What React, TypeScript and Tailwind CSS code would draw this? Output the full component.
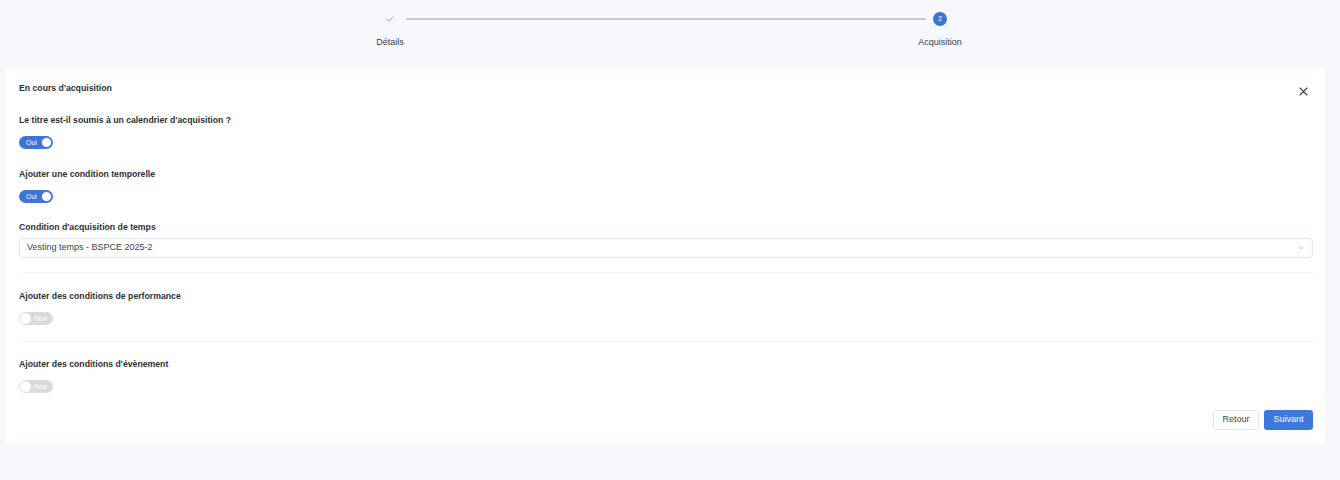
import React from 'react';

const font = { fontFamily: '"Liberation Sans", Arial, sans-serif' };

interface ToggleProps {
  on: boolean;
}

const Toggle: React.FC<ToggleProps> = ({ on }) => {
  if (on) {
    return (
      <div className="flex h-[13px] w-[34px] items-center justify-between rounded-full bg-[#3d74d6] pl-[7px] pr-[1px]">
        <span className="text-[7px] leading-none text-white">Oui</span>
        <span className="h-[11px] w-[11px] rounded-full border border-[#3d74d6] bg-white" />
      </div>
    );
  }
  return (
    <div className="flex h-[13px] w-[34px] items-center justify-between rounded-full bg-[#d9dadc] pl-[1px] pr-[6px]">
      <span className="h-[11px] w-[11px] rounded-full bg-white" />
      <span className="text-[7px] leading-none text-white">Non</span>
    </div>
  );
};

const Label: React.FC<{ children: React.ReactNode; className?: string }> = ({ children, className }) => (
  <div className={`h-[12px] text-[8.7px] font-semibold leading-[12px] text-[#2b2f36] ${className ?? ''}`}>{children}</div>
);

export default function App() {
  return (
    <div className="min-h-[480px] w-[1340px] bg-[#f6f8fb]" style={font}>
      {/* stepper */}
      <div className="ml-[360px] w-[610px] pt-[12px]">
        <div className="flex items-center px-[23px]">
          <svg width="14" height="14" viewBox="0 0 14 14" fill="none">
            <path d="M4 7.3l2 2 4-4.4" stroke="#9aa1ab" strokeWidth="1" strokeLinecap="round" strokeLinejoin="round" />
          </svg>
          <div className="ml-[9px] mr-[7px] h-[1.5px] flex-1 bg-[#c3c9d2]" />
          <div className="flex h-[14px] w-[14px] items-center justify-center rounded-full bg-[#3d74d6] text-[7px] text-white">2</div>
        </div>
        <div className="mt-[10px] flex justify-between">
          <div className="w-[60px] text-center text-[9px] leading-[12px] text-[#3b3f46]">Détails</div>
          <div className="w-[60px] text-center text-[9px] leading-[12px] text-[#3b3f46]">Acquisition</div>
        </div>
      </div>

      {/* card */}
      <div className="ml-[5px] mt-[20px] w-[1320px] rounded-[3px] bg-white px-[14px] pb-[14px] pt-[14px]">
        <div className="flex h-[12px] items-center justify-between">
          <Label>En cours d'acquisition</Label>
          <svg className="mr-[3px] translate-y-[3px]" width="9" height="9" viewBox="0 0 9 9" fill="none">
            <path d="M1 1l7 7M8 1L1 8" stroke="#3a3e45" strokeWidth="1.1" strokeLinecap="round" />
          </svg>
        </div>

        <Label className="mt-[20px]">Le titre est-il soumis à un calendrier d'acquisition ?</Label>
        <div className="mt-[10px]">
          <Toggle on />
        </div>

        <Label className="mt-[19px]">Ajouter une condition temporelle</Label>
        <div className="mt-[10px]">
          <Toggle on />
        </div>

        <Label className="mt-[18px]">Condition d'acquisition de temps</Label>
        <div className="mt-[5px] flex h-[20px] w-[1294px] items-center justify-between rounded-[4px] border border-[#e3e6ea] pl-[7px] pr-[7px]">
          <span className="text-[9px] text-[#3b3f46]">Vesting temps - BSPCE 2025-2</span>
          <svg width="8" height="8" viewBox="0 0 8 8" fill="none">
            <path d="M2 3l2 2 2-2" stroke="#c2c6cc" strokeWidth="0.9" strokeLinecap="round" strokeLinejoin="round" />
          </svg>
        </div>

        <div className="mt-[14px] h-px w-[1294px] bg-[#f3f4f6]" />

        <Label className="mt-[17px]">Ajouter des conditions de performance</Label>
        <div className="mt-[10px]">
          <Toggle on={false} />
        </div>

        <div className="mt-[16px] h-px w-[1294px] bg-[#f3f4f6]" />

        <Label className="mt-[16px]">Ajouter des conditions d'évènement</Label>
        <div className="mt-[10px]">
          <Toggle on={false} />
        </div>

        <div className="mt-[17px] flex w-[1294px] justify-end gap-[5px]">
          <button className="h-[20px] w-[46px] rounded-[3px] border border-[#e3e6ea] bg-white text-[9px] text-[#3b3f46]">Retour</button>
          <button className="h-[20px] w-[49px] rounded-[3px] bg-[#3d79dc] text-[9px] text-white">Suivant</button>
        </div>
      </div>
    </div>
  );
}
